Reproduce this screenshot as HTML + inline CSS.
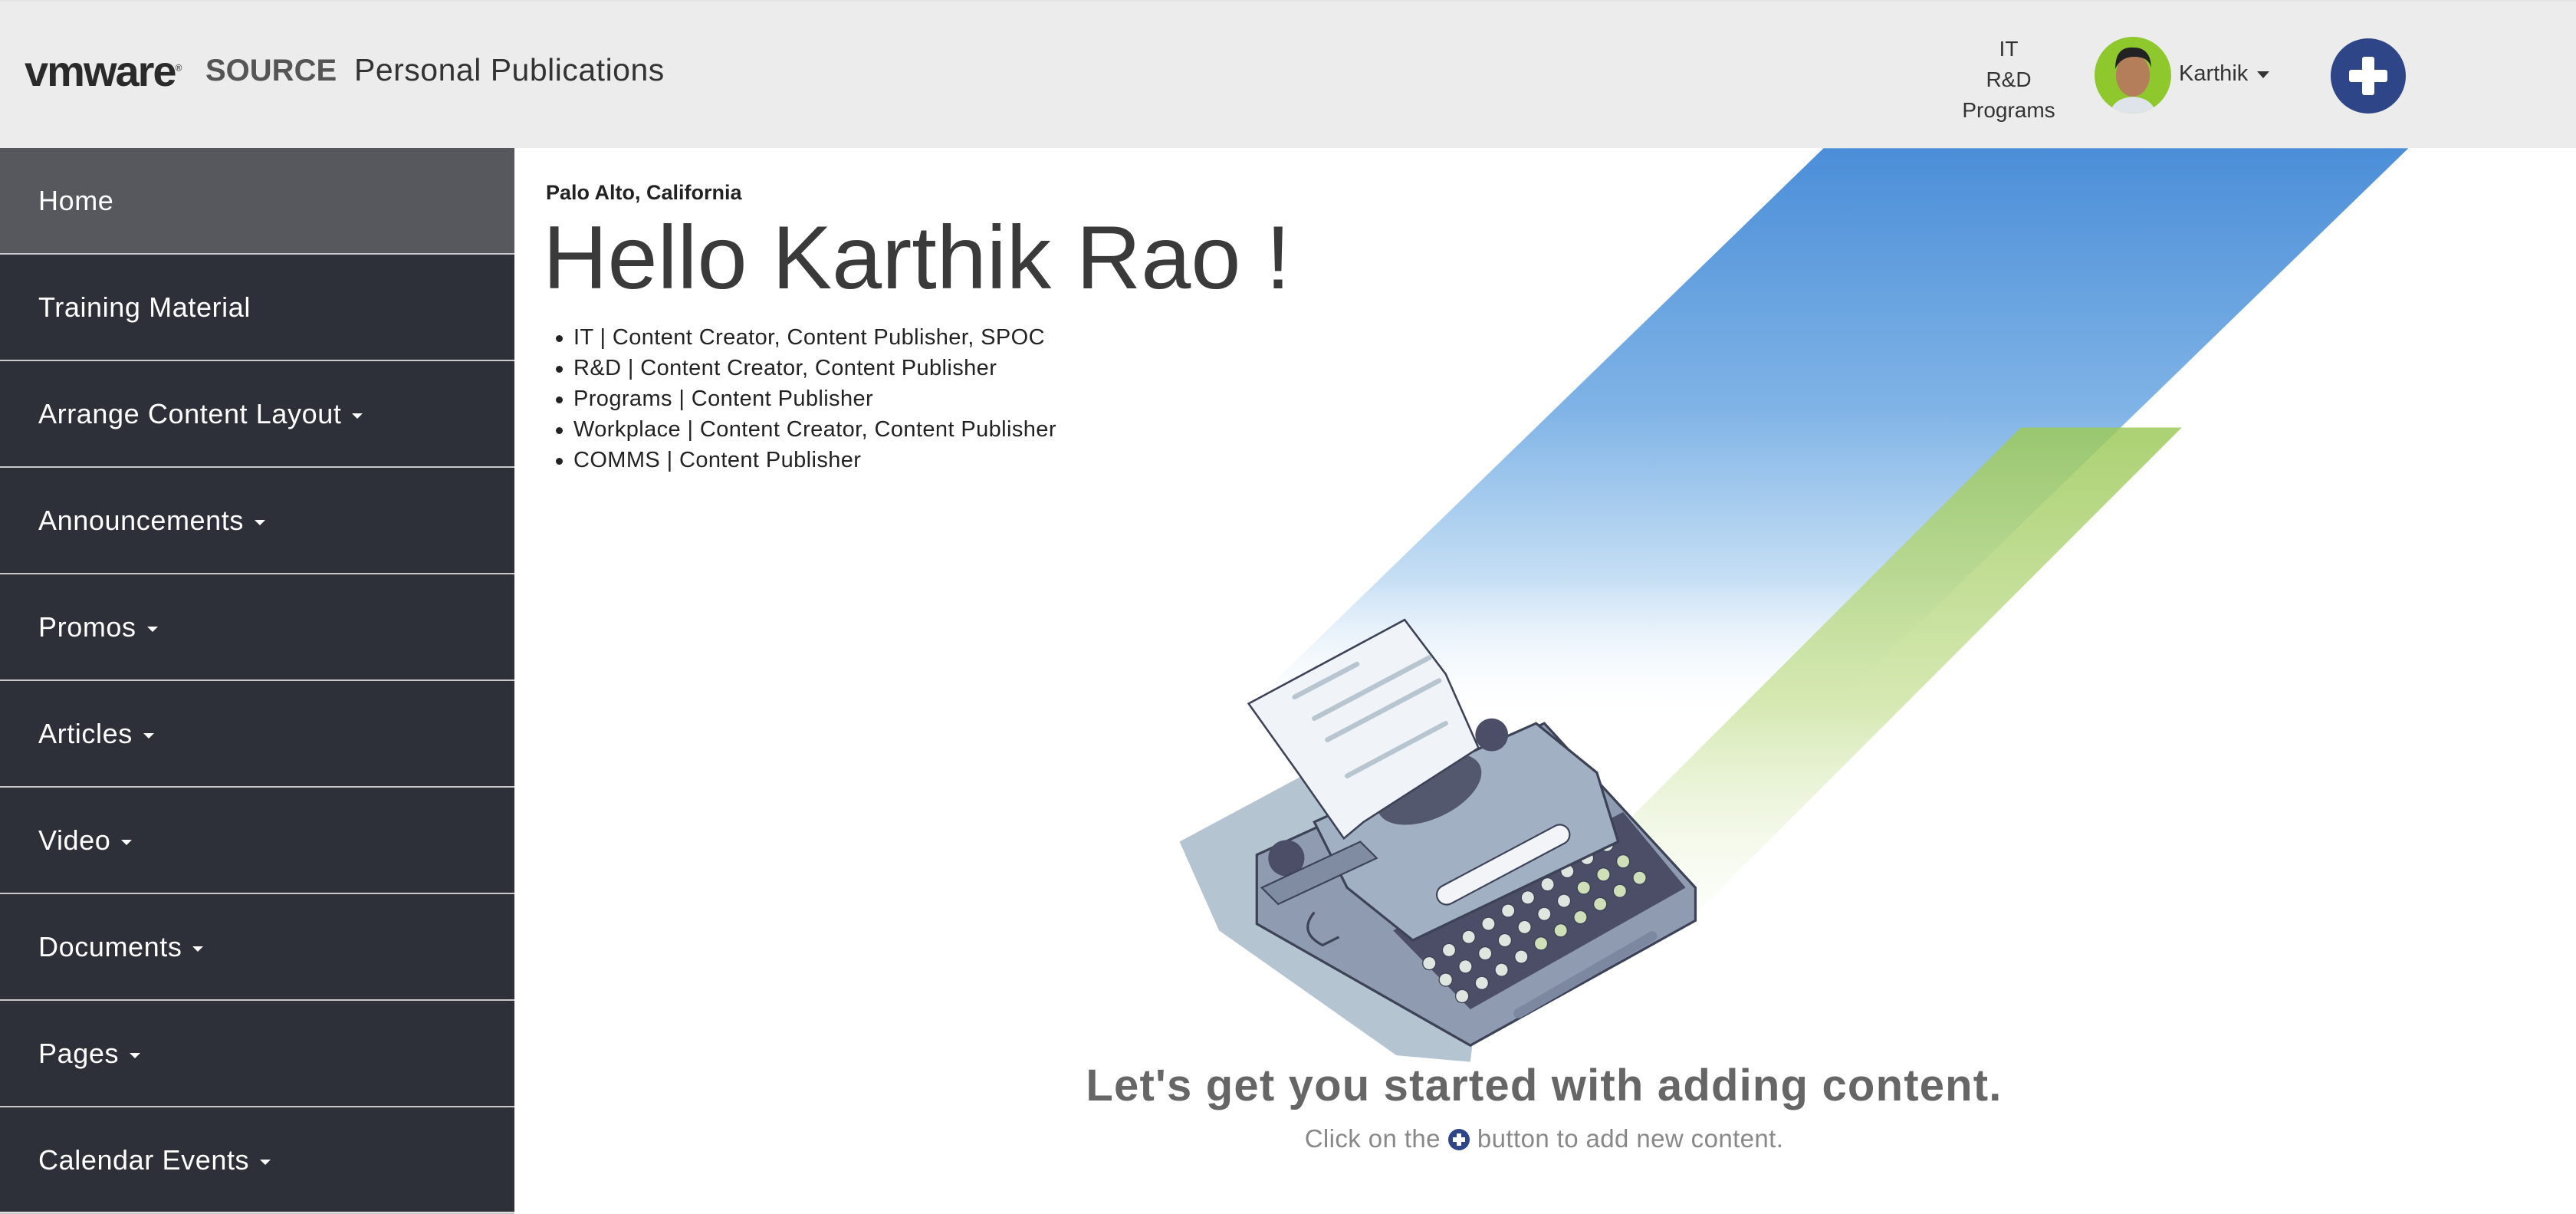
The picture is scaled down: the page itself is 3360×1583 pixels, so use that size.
<!DOCTYPE html>
<html><head><meta charset="utf-8"><style>
*{margin:0;padding:0;box-sizing:border-box}
body{width:3360px;height:1580px;overflow:hidden;background:#fff;font-family:"Liberation Sans",sans-serif;position:relative}
.hdr{position:absolute;left:0;top:0;width:3360px;height:193px;background:#ececec;border-top:2px solid #e4e4e4}
.logo{position:absolute;left:32px;top:58px;font-size:56px;font-weight:bold;letter-spacing:-2px;color:#2a2a2a}
.logo sup{font-size:12px;letter-spacing:0;font-weight:normal}
.src{position:absolute;left:268px;top:68px;font-size:40px;color:#555;font-weight:bold;letter-spacing:0px}
.pp{position:absolute;left:462px;top:66px;font-size:41px;color:#333;letter-spacing:0.5px}
.bu{position:absolute;left:2540px;top:42px;width:160px;text-align:center;font-size:28px;line-height:40px;color:#333}
.av{position:absolute;left:2732px;top:46px;width:100px;height:100px;border-radius:50%;background:#8ec82c;overflow:hidden}
.kn{position:absolute;left:2842px;top:78px;font-size:29px;color:#333}
.caret{display:inline-block;width:0;height:0;border-left:8px solid transparent;border-right:8px solid transparent;border-top:9px solid currentColor;vertical-align:middle;margin-left:12px}
.plus{position:absolute;left:3040px;top:48px;width:98px;height:98px;border-radius:50%;background:#2e4588}
.plus:before{content:"";position:absolute;left:41px;top:24px;width:16px;height:50px;background:#fff;border-radius:3px}
.plus:after{content:"";position:absolute;left:24px;top:41px;width:50px;height:16px;background:#fff;border-radius:3px}
.side{position:absolute;left:0;top:193px;width:671px;height:1387px;background:#2d3039}
.it{height:139px;border-bottom:2px solid #c9c9cc;color:#fff;font-size:36px;line-height:137px;padding-left:50px;letter-spacing:0.6px}
.it.act{background:#57585d}
.it .caret{border-left-width:7px;border-right-width:7px;border-top-width:7px;margin-left:14px}
.loc{position:absolute;left:712px;top:236px;font-size:27px;font-weight:bold;color:#222}
.hello{position:absolute;left:708px;top:268px;font-size:117px;font-weight:300;color:#3a3a3a;letter-spacing:0px}
ul{position:absolute;left:748px;top:420px;font-size:29px;line-height:40px;color:#222;list-style:none;letter-spacing:0.4px}
li:before{content:"";position:absolute;left:-23px;margin-top:17px;width:9px;height:9px;border-radius:50%;background:#222}
.cta{position:absolute;left:1214px;top:1382px;width:1600px;text-align:center;font-size:58px;font-weight:bold;color:#666;letter-spacing:1.2px}
.sub{position:absolute;left:1214px;top:1466px;width:1600px;text-align:center;font-size:33px;color:#888;letter-spacing:0.4px}
.mini{display:inline-block;width:28px;height:28px;border-radius:50%;background:#2e4588;position:relative;vertical-align:-4px;margin:0 10px}
.mini:before{content:"";position:absolute;left:11px;top:6px;width:6px;height:16px;background:#fff}
.mini:after{content:"";position:absolute;left:6px;top:11px;width:16px;height:6px;background:#fff}
svg.art{position:absolute;left:0;top:0}
</style></head><body>
<svg class="art" width="3360" height="1580" viewBox="0 0 1568 737">
<defs>
<linearGradient id="bg" x1="0" y1="90" x2="0" y2="440" gradientUnits="userSpaceOnUse">
<stop offset="0" stop-color="#4b8ed8"/><stop offset="0.45" stop-color="#7fb3e6"/><stop offset="0.75" stop-color="#c6dff4"/><stop offset="1" stop-color="#fff" stop-opacity="0"/></linearGradient>
<linearGradient id="gg" x1="0" y1="260" x2="0" y2="600" gradientUnits="userSpaceOnUse">
<stop offset="0" stop-color="#9cc95a"/><stop offset="0.5" stop-color="#cfe5a6"/><stop offset="1" stop-color="#fff" stop-opacity="0"/></linearGradient>
</defs>
<polygon points="1110,90 1466,90 889,650 533,650" fill="url(#bg)"/>
<polygon points="1230,260 1328,260 988,600 890,600" fill="url(#gg)" opacity="0.85"/>
<polygon points="718,512 800,468 905,560 895,646 850,642 742,566" fill="#b4c4d1"/>
<polygon points="765,520 940,440 1032,540 1032,560 895,636 765,562" fill="#8e9bb0" stroke="#3d4257" stroke-width="1.5"/>
<polygon points="848,566 988,494 1026,540 895,614" fill="#4b4e66"/>
<g fill="#dfe6e0" stroke="#3d4257" stroke-width="0.6">
<circle cx="870" cy="586" r="4"/><circle cx="882" cy="578" r="4"/><circle cx="894" cy="570" r="4"/><circle cx="906" cy="562" r="4"/><circle cx="918" cy="554" r="4"/><circle cx="930" cy="546" r="4"/><circle cx="942" cy="538" r="4"/><circle cx="954" cy="530" r="4"/><circle cx="966" cy="522" r="4"/><circle cx="978" cy="514" r="4"/>
<circle cx="880" cy="596" r="4"/><circle cx="892" cy="588" r="4"/><circle cx="904" cy="580" r="4"/><circle cx="916" cy="572" r="4"/><circle cx="928" cy="564" r="4"/><circle cx="940" cy="556" r="4"/><circle cx="952" cy="548" r="4"/><circle cx="964" cy="540" r="4" fill="#cfe0b8"/><circle cx="976" cy="532" r="4" fill="#cfe0b8"/><circle cx="988" cy="524" r="4" fill="#cfe0b8"/>
<circle cx="890" cy="606" r="4"/><circle cx="902" cy="598" r="4"/><circle cx="914" cy="590" r="4"/><circle cx="926" cy="582" r="4"/><circle cx="938" cy="574" r="4" fill="#cfe0b8"/><circle cx="950" cy="566" r="4" fill="#cfe0b8"/><circle cx="962" cy="558" r="4" fill="#cfe0b8"/><circle cx="974" cy="550" r="4" fill="#cfe0b8"/><circle cx="986" cy="542" r="4" fill="#cfe0b8"/><circle cx="998" cy="534" r="4" fill="#cfe0b8"/>
</g>
<rect x="915" y="590" width="100" height="6" rx="3" transform="rotate(-30 965 593)" fill="#7c88a0"/>
<polygon points="800,500 935,440 972,470 985,512 860,572 820,540" fill="#a1b0c3" stroke="#3d4257" stroke-width="1.5"/>
<rect x="870" y="520" width="90" height="12" rx="6" transform="rotate(-28 915 526)" fill="#f2f4f7" stroke="#3d4257"/>
<ellipse cx="870" cy="480" rx="34" ry="18" fill="#54586f" transform="rotate(-25 870 480)"/>
<circle cx="908" cy="447" r="10" fill="#4b4e66"/>
<circle cx="783" cy="522" r="11" fill="#4b4e66"/>
<polygon points="760,428 855,377 880,410 900,455 830,500 818,510 790,470" fill="#f0f3f8" stroke="#3d4257" stroke-width="1.2"/>
<g stroke="#b7c5d0" stroke-width="3" stroke-linecap="round"><line x1="788" y1="424" x2="826" y2="404"/><line x1="800" y1="437" x2="870" y2="400"/><line x1="808" y1="450" x2="876" y2="414"/><line x1="820" y1="472" x2="880" y2="440"/></g>
<path d="M768,540 l60,-28 l10,10 l-60,28 z" fill="#7f8ca2" stroke="#3d4257"/>
<path d="M800,555 q-10,12 5,20 l10,-5" fill="none" stroke="#3d4257" stroke-width="1.5"/>
</svg>
<div class="hdr">
<div class="logo">vmware<sup>®</sup></div>
<div class="src">SOURCE</div>
<div class="pp">Personal Publications</div>
<div class="bu">IT<br>R&amp;D<br>Programs</div>
<div class="av"><svg width="100" height="100" viewBox="0 0 100 100"><ellipse cx="50" cy="50" rx="22" ry="28" fill="#b57e5a"/><path d="M27,42 q0,-30 24,-28 q22,0 23,26 q-4,-14 -22,-14 q-18,0 -25,16z" fill="#222"/><path d="M20,100 q4,-20 30,-22 q26,2 30,22z" fill="#dfe3ea"/></svg></div>
<div class="kn">Karthik<span class="caret" style="color:#333"></span></div>
<div class="plus"></div>
</div>
<div class="side">
<div class="it act">Home</div>
<div class="it">Training Material</div>
<div class="it">Arrange Content Layout<span class="caret"></span></div>
<div class="it">Announcements<span class="caret"></span></div>
<div class="it">Promos<span class="caret"></span></div>
<div class="it">Articles<span class="caret"></span></div>
<div class="it">Video<span class="caret"></span></div>
<div class="it">Documents<span class="caret"></span></div>
<div class="it">Pages<span class="caret"></span></div>
<div class="it">Calendar Events<span class="caret"></span></div>
</div>
<div class="loc">Palo Alto, California</div>
<div class="hello">Hello Karthik Rao !</div>
<ul>
<li>IT | Content Creator, Content Publisher, SPOC</li>
<li>R&amp;D | Content Creator, Content Publisher</li>
<li>Programs | Content Publisher</li>
<li>Workplace | Content Creator, Content Publisher</li>
<li>COMMS | Content Publisher</li>
</ul>
<div class="cta">Let's get you started with adding content.</div>
<div class="sub">Click on the<span class="mini"></span>button to add new content.</div>
</body></html>
